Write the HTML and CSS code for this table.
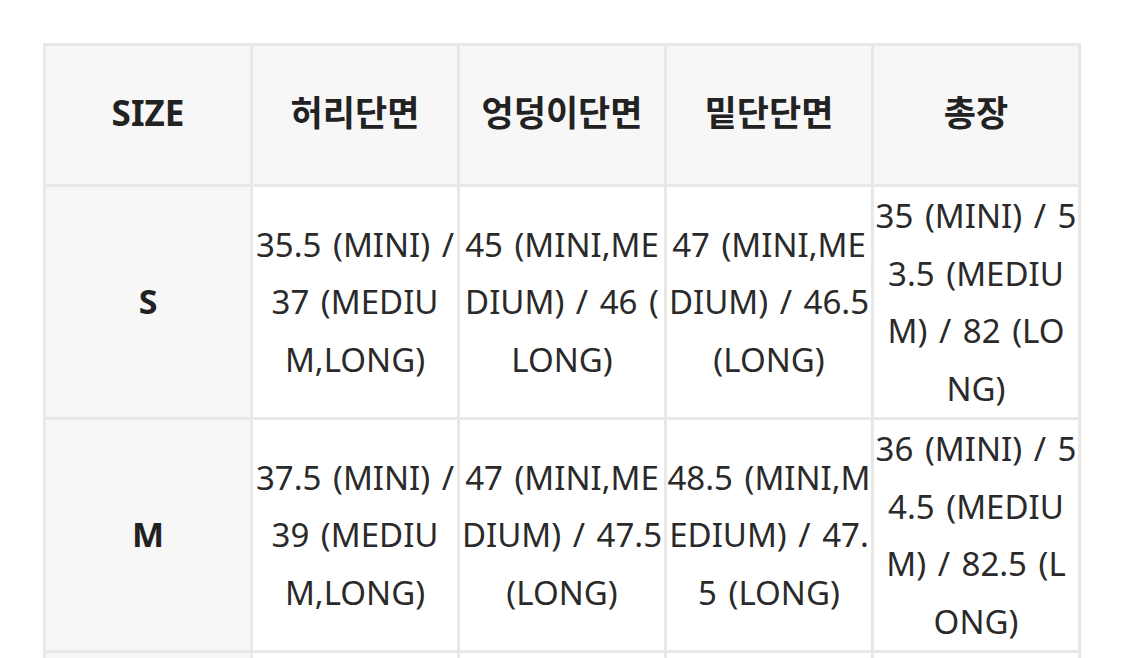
FILE: index.html
```html
<!DOCTYPE html>
<html lang="ko">
<head>
<meta charset="utf-8">
<title>사이즈 표</title>
<link rel="stylesheet" href="styles.css">
</head>
<body>
<table class="size-table">
  <thead>
    <tr>
      <th class="head">SIZE</th>
      <th class="head">허리단면</th>
      <th class="head">엉덩이단면</th>
      <th class="head">밑단단면</th>
      <th class="head">총장</th>
    </tr>
  </thead>
  <tbody>
    <tr>
      <th class="size">S</th>
      <td class="cell">35.5 (MINI) / 37 (MEDIUM,LONG)</td>
      <td class="cell">45 (MINI,MEDIUM) / 46 (<wbr>LONG)</td>
      <td class="cell">47 (MINI,MEDIUM) / 46.5 (LONG)</td>
      <td class="cell">35 (MINI) / 53.5 (MEDIUM) / 82 (LO<span class="keep">NG)</span></td>
    </tr>
    <tr>
      <th class="size">M</th>
      <td class="cell">37.5 (MINI) / 39 (MEDIUM,LONG)</td>
      <td class="cell">47 (MINI,MEDIUM) / 47.5 (LONG)</td>
      <td class="cell">48.5 (MINI,MEDIUM) / 47.5 (LONG)</td>
      <td class="cell">36 (MINI) / 54.5 (MEDIUM) / 82.5 (LONG)</td>
    </tr>
    <tr>
      <th class="size">L</th>
      <td class="cell">39.5 (MINI) / 41 (MEDIUM,LONG)</td>
      <td class="cell">49 (MINI,MEDIUM) / 49.5 (LONG)</td>
      <td class="cell">50 (MINI,MEDIUM) / 49 (LONG)</td>
      <td class="cell">37 (MINI) / 55.5 (MEDIUM) / 83 (LONG)</td>
    </tr>
  </tbody>
</table>
</body>
</html>
```

FILE: styles.css
```css
html, body {
  margin: 0;
  padding: 0;
  background: #ffffff;
}

body {
  font-family: "Noto Sans", "Noto Sans CJK KR", sans-serif;
  color: #2a2a2a;
}

.size-table {
  margin: 43px 0 0 43px;
  width: 1038px;
  table-layout: fixed;
  border-collapse: separate;
  border-spacing: 3px;
  background: #e8e8e8;
}

.head,
.size,
.cell {
  padding: 0;
  text-align: center;
  vertical-align: middle;
  line-height: 57.5px;
}

.head {
  padding: 38px 0 42.5px;
  background: #f7f7f7;
  color: #222222;
  font-size: 35px;
  font-weight: 700;
}

.size {
  background: #f7f7f7;
  color: #222222;
  font-size: 34px;
  font-weight: 700;
}

.cell {
  background: #ffffff;
  font-size: 33px;
  font-weight: 400;
  word-spacing: 3px;
  word-break: break-all;
}

.keep {
  white-space: nowrap;
}
```
